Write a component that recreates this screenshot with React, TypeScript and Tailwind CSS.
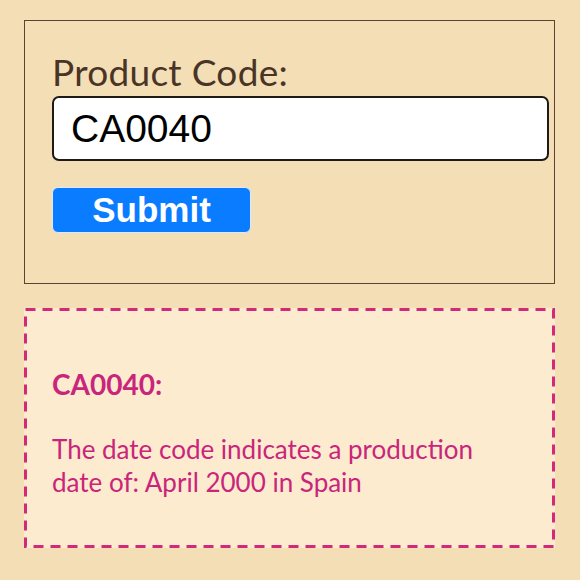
export default function App() {
  return (
    <div className="min-h-[580px] w-[580px] bg-[#f3deb6] pl-[24px] pt-[20px] font-['Lato',sans-serif]">
      <section className="h-[264px] w-[531px] border border-[#5a4330] pl-[27px] pt-[28px]">
        <label className="block text-[37px] leading-[46px] tracking-[0.3px] text-[#4a3426]">Product Code:</label>
        <input
          className="mt-[1px] block h-[65px] w-[497px] rounded-[7px] border-2 border-[#1f1a15] bg-white px-[17px] font-['Liberation_Sans',Arial,sans-serif] text-[39px] text-black outline-none"
          defaultValue="CA0040"
        />
        <button className="mt-[26px] block h-[46px] w-[199px] rounded-[6px] border border-[#dbe9fb] bg-[#0a7cff] font-['Liberation_Sans',Arial,sans-serif] text-[35px] leading-[40px] font-bold text-white">
          Submit
        </button>
      </section>
      <section className="relative mt-[24px] h-[240px] w-[531px] bg-[#fdebd0] pl-[28px] pt-[56px] text-[#c9257a]">
        <svg className="pointer-events-none absolute inset-0" width="531" height="240">
          <rect x="1.5" y="1.5" width="528" height="237" fill="none" stroke="#d02a78" strokeWidth="3" strokeDasharray="10 7" />
        </svg>
        <h2 className="text-[28px] leading-[40px] font-bold">CA0040:</h2>
        <p className="mt-[29px] w-[450px] text-[26px] leading-[33px]">
          The date code indicates a production date of: April 2000 in Spain
        </p>
      </section>
    </div>
  );
}
